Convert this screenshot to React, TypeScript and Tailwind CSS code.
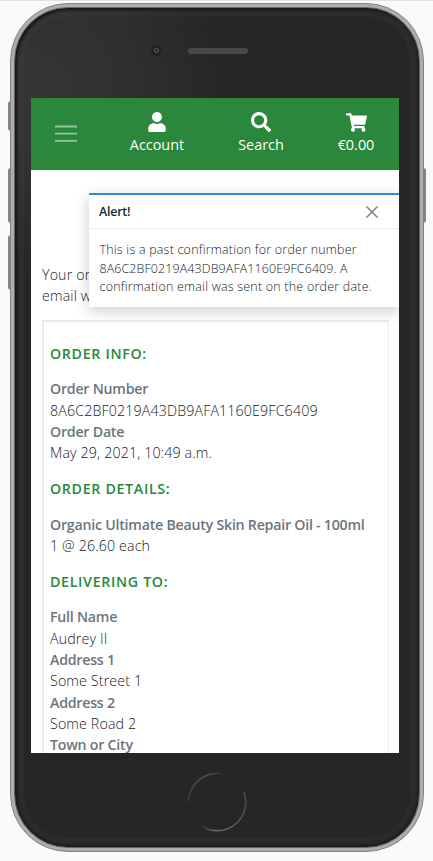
import React from "react";
import { FaUser, FaSearch, FaShoppingCart } from "react-icons/fa";

const LINE = "h-[21.33px] whitespace-nowrap leading-[21.33px]";

function NavItem({ icon, label, className }: { icon: React.ReactNode; label: string; className: string }) {
  return (
    <a className={`flex flex-col items-center text-white ${className}`}>
      <span className="flex h-[22px] items-center">{icon}</span>
      <span className="mt-px text-[14.4px] leading-[22px] font-normal">{label}</span>
    </a>
  );
}

function Heading({ children }: { children: React.ReactNode }) {
  return (
    <h2 className="mb-[14.3px] h-[21.33px] text-[14.22px] leading-[21.33px] font-semibold tracking-[0.67px] whitespace-nowrap text-[#28883c] uppercase">
      {children}
    </h2>
  );
}

function Row({ label, value }: { label: string; value: string }) {
  return (
    <div>
      <div className={`${LINE} font-semibold tracking-[-0.25px] text-[#6c757d]`}>{label}</div>
      {value && <div className={`${LINE} tracking-[0.14px] text-[#16191c]`}>{value}</div>}
    </div>
  );
}

function Toast() {
  return (
    <div className="absolute top-[95px] left-[58px] h-[114px] w-[311px] border-t-2 border-[#3b86ee] bg-white shadow-[0_4px_14px_rgba(0,0,0,0.2)]">
      <div className="flex h-[34px] items-center justify-between border-b border-[#f0f0f0] pr-[22px] pl-[10px]">
        <strong className="mt-[2px] text-[12.4px] font-semibold tracking-[-0.2px] text-[#212529]">Alert!</strong>
        <svg viewBox="0 0 12 12" className="mt-px h-3 w-3" fill="none" stroke="#808080" strokeWidth="1.5">
          <path d="M0.5 0.5 11.5 11.5M11.5 0.5 0.5 11.5" />
        </svg>
      </div>
      <div className="px-[10.5px] pt-[12px] text-[12.44px] leading-[18.67px] whitespace-nowrap text-[#16191c]">
        <p className="tracking-[0.23px]">This is a past confirmation for order number</p>
        <p className="tracking-[0.12px]">8A6C2BF0219A43DB9AFA1160E9FC6409. A</p>
        <p className="tracking-[0.24px]">confirmation email was sent on the order date.</p>
      </div>
    </div>
  );
}

function Screen() {
  return (
    <div className="relative ml-4 h-[655px] w-[368px] overflow-hidden bg-white text-[14.22px] font-light">
      <header className="flex h-[72px] bg-[#2a873c] pt-[13px]">
        <svg viewBox="0 0 22 18" className="mt-[14px] ml-6 h-[18px] w-[22px] shrink-0" stroke="#94c39d" strokeWidth="1.8">
          <path d="M0 1.5h22M0 8.7h22M0 15.9h22" />
        </svg>
        <NavItem icon={<FaUser size={20} />} label="Account" className="ml-[45px] w-[70px]" />
        <NavItem icon={<FaSearch size={20} />} label="Search" className="ml-[34px] w-[70px]" />
        <NavItem icon={<FaShoppingCart size={21} />} label="€0.00" className="ml-[25px] w-[70px]" />
      </header>
      <main className="px-[11px] pt-[94px]">
        <p className="h-[56px] leading-[21.33px] tracking-[0.14px] text-[#212529]">
          Your order
          <br />
          email will
        </p>
        <section className="w-[347px] border-2 border-r border-[#ebebed] px-[6px] pt-[20.8px]">
          <Heading>Order Info:</Heading>
          <Row label="Order Number" value="8A6C2BF0219A43DB9AFA1160E9FC6409" />
          <Row label="Order Date" value="May 29, 2021, 10:49 a.m." />
          <div className="h-[14.3px]" />
          <Heading>Order Details:</Heading>
          <Row label="Organic Ultimate Beauty Skin Repair Oil - 100ml" value="1 @ 26.60 each" />
          <div className="h-[14.3px]" />
          <Heading>Delivering To:</Heading>
          <Row label="Full Name" value="Audrey II" />
          <Row label="Address 1" value="Some Street 1" />
          <Row label="Address 2" value="Some Road 2" />
          <Row label="Town or City" value="" />
          <div className="h-12" />
        </section>
      </main>
      <Toast />
    </div>
  );
}

export default function App() {
  return (
    <div className="h-[861px] w-[433px] overflow-hidden border-t border-[#e2e2e2] bg-[#fafafa] pt-[2px] pl-[10px] font-['Open_Sans','Noto_Sans',sans-serif]">
      <div className="relative h-[849px] w-[414px]">
        <i className="absolute top-[98px] -left-[2px] h-[30px] w-[3px] rounded-l-sm bg-[#858585]" />
        <i className="absolute top-[165px] -left-[2px] h-[55px] w-[3px] rounded-l-sm bg-[#858585]" />
        <i className="absolute top-[232px] -left-[2px] h-[55px] w-[3px] rounded-l-sm bg-[#858585]" />
        <i className="absolute top-[165px] -right-[2px] h-[55px] w-[3px] rounded-r-sm bg-[#858585]" />
        <div className="relative h-full w-full rounded-[58px] border border-[#858585] bg-[#adadad] p-[3px]">
          <div className="h-full w-full rounded-[54px] border border-[#686868] bg-[radial-gradient(circle_at_20px_80px,#353535_0,#303030_90px,#262626_190px)] shadow-[inset_2px_2px_3px_#151515,inset_-1px_-2px_3px_#1b1b1b,inset_0_0_0_9px_rgba(255,255,255,0.025)]">
            <div className="flex h-[90px] items-start pt-[37px]">
              <div className="ml-[136px] flex h-[11px] w-[11px] items-center justify-center rounded-full bg-[#202026]">
                <span className="h-[5px] w-[5px] rounded-full border border-[#5c5a66] bg-[#292832]" />
              </div>
              <div className="mt-[3px] ml-[26px] h-[6px] w-[60px] rounded-full bg-[#484848] bg-[radial-gradient(#5c5c5c_35%,transparent_40%)] bg-[size:2px_2px]" />
            </div>
            <Screen />
            <svg viewBox="0 0 60 60" className="mt-[19px] ml-[172px] h-[60px] w-[60px]" fill="none">
              <defs>
                <linearGradient id="ringTop" x1="0" y1="0" x2="1" y2="0">
                  <stop offset="0" stopColor="#3c3c3c" />
                  <stop offset="0.5" stopColor="#525252" />
                  <stop offset="1" stopColor="#262626" />
                </linearGradient>
                <linearGradient id="ringBottom" x1="0" y1="0" x2="1" y2="0">
                  <stop offset="0" stopColor="#303030" />
                  <stop offset="0.3" stopColor="#686868" />
                  <stop offset="1" stopColor="#4a4a4a" />
                </linearGradient>
              </defs>
              <path d="M1.5 29A28.5 28.5 0 0 1 38 2.7" stroke="url(#ringTop)" strokeWidth="1.8" />
              <path d="M57 20.5A28.5 28.5 0 0 1 14.5 54" stroke="url(#ringBottom)" strokeWidth="1.8" />
            </svg>
          </div>
        </div>
      </div>
    </div>
  );
}
